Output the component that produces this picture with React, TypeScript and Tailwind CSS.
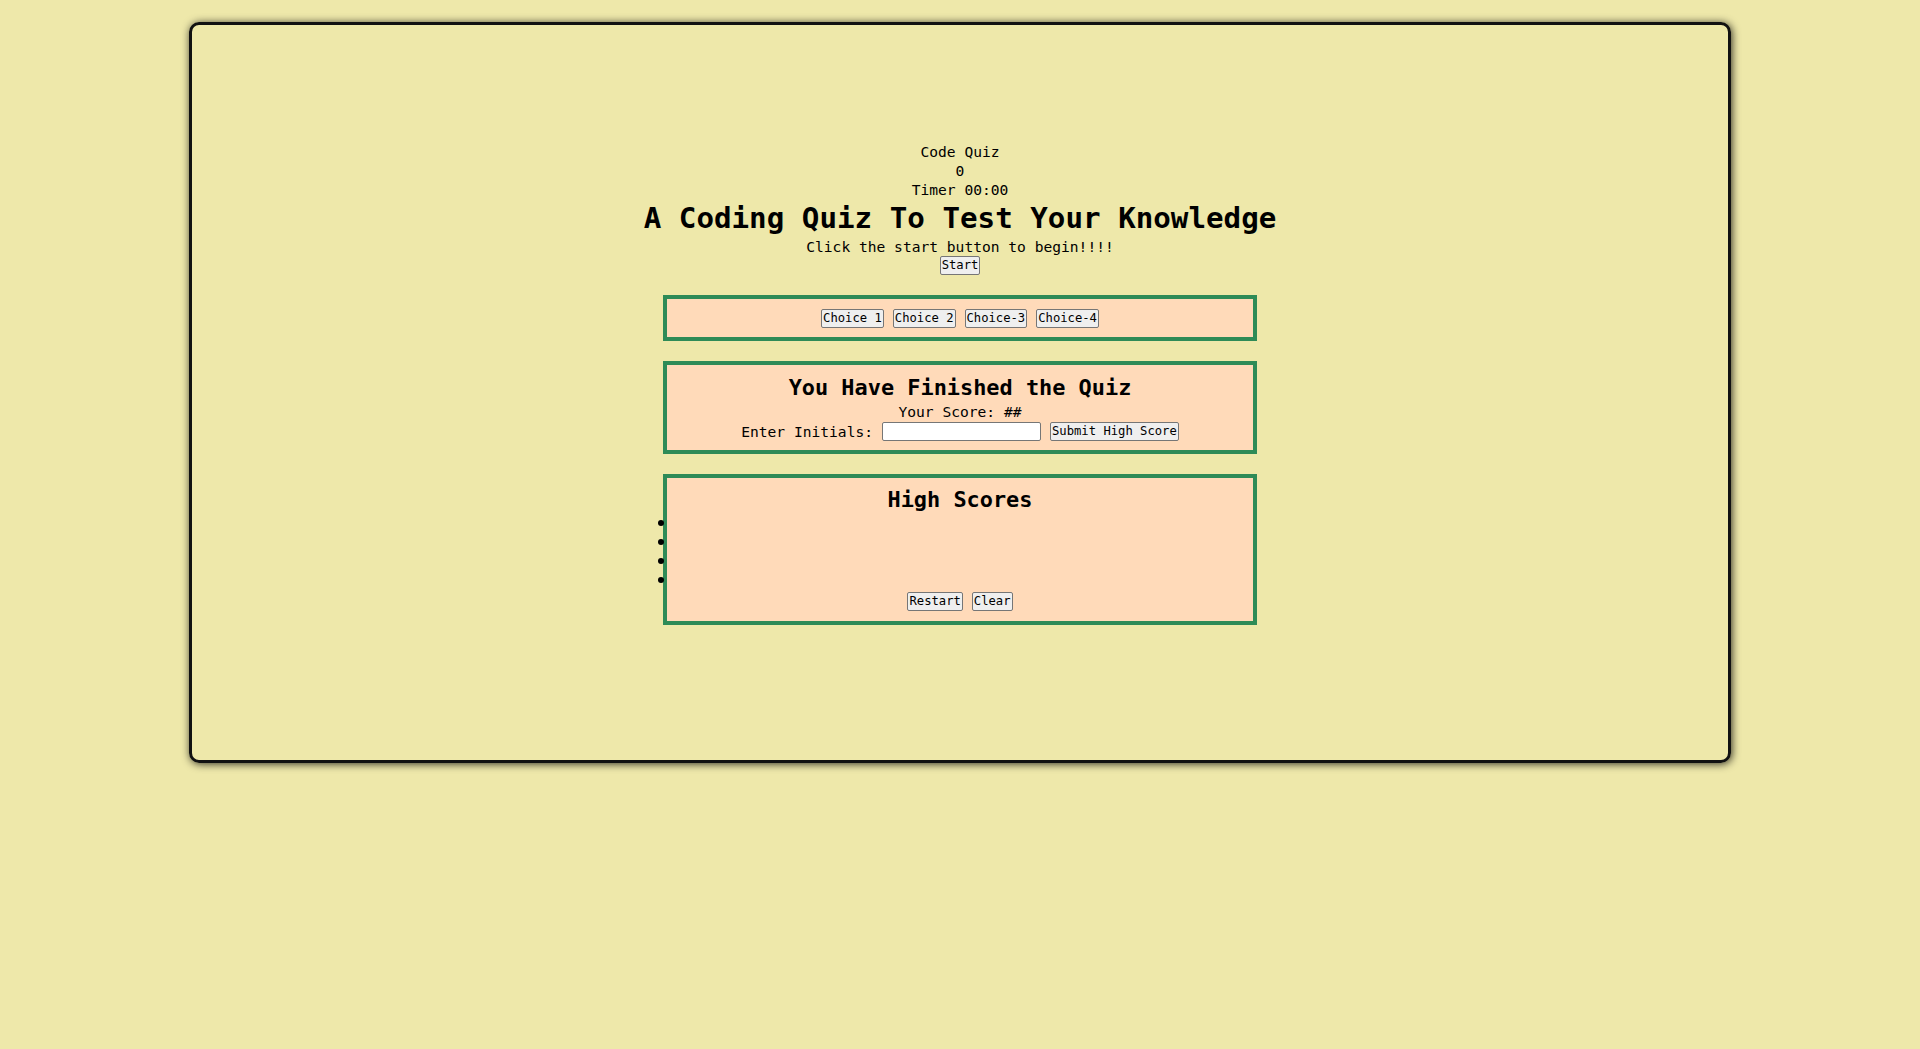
import React from "react";

function Btn({ children }: { children: React.ReactNode }) {
  return (
    <button className="h-[19px] px-[1px] border border-[#767676] rounded-[2px] bg-[#efefef] text-black text-[12.2px] leading-[15px] font-['DejaVu_Sans_Mono',monospace]">
      {children}
    </button>
  );
}

export default function App() {
  return (
    <div className="min-h-screen bg-[#eee8aa] pt-[22px] font-['DejaVu_Sans_Mono',monospace] text-black">
      <div className="mx-auto w-[1542px] h-[741px] border-[3px] border-[#111] rounded-[10px] shadow-[1px_1px_9px_rgba(0,0,0,0.8)] pt-[117px] flex flex-col items-center text-[14.6px] leading-[19px]">
        <div>Code Quiz</div>
        <div>0</div>
        <div>Timer 00:00</div>
        <h1 className="text-[29.2px] leading-[38px] font-bold">A Coding Quiz To Test Your Knowledge</h1>
        <p>Click the start button to begin!!!!</p>
        <Btn>Start</Btn>

        <div className="mt-[20px] w-[594px] border-4 border-[#2e8b57] bg-[#ffdab9] pt-[10px] pb-[9px] flex justify-center gap-[9px]">
          <Btn>Choice 1</Btn>
          <Btn>Choice 2</Btn>
          <Btn>Choice-3</Btn>
          <Btn>Choice-4</Btn>
        </div>

        <div className="mt-[20px] w-[594px] border-4 border-[#2e8b57] bg-[#ffdab9] pt-[9px] pb-[9px] flex flex-col items-center">
          <h2 className="text-[21.9px] leading-[28px] font-bold">You Have Finished the Quiz</h2>
          <div>Your Score: ##</div>
          <div className="h-[20px] flex items-center justify-center gap-[9px]">
            <span>Enter Initials:</span>
            <input
              type="text"
              className="w-[159px] h-[19px] border border-[#767676] rounded-[2px] bg-white"
            />
            <Btn>Submit High Score</Btn>
          </div>
        </div>

        <div className="mt-[20px] w-[594px] border-4 border-[#2e8b57] bg-[#ffdab9] pt-[8px] pb-[10px] flex flex-col">
          <h2 className="text-[21.9px] leading-[27px] font-bold text-center">High Scores</h2>
          <ul className="flex flex-col">
            {[0, 1, 2, 3].map((i) => (
              <li key={i} className="h-[19px] flex items-center">
                <span className="-ml-[9px] w-[6px] h-[6px] rounded-full bg-black" />
              </li>
            ))}
          </ul>
          <div className="mt-[3px] flex justify-center gap-[9px]">
            <Btn>Restart</Btn>
            <Btn>Clear</Btn>
          </div>
        </div>
      </div>
    </div>
  );
}
